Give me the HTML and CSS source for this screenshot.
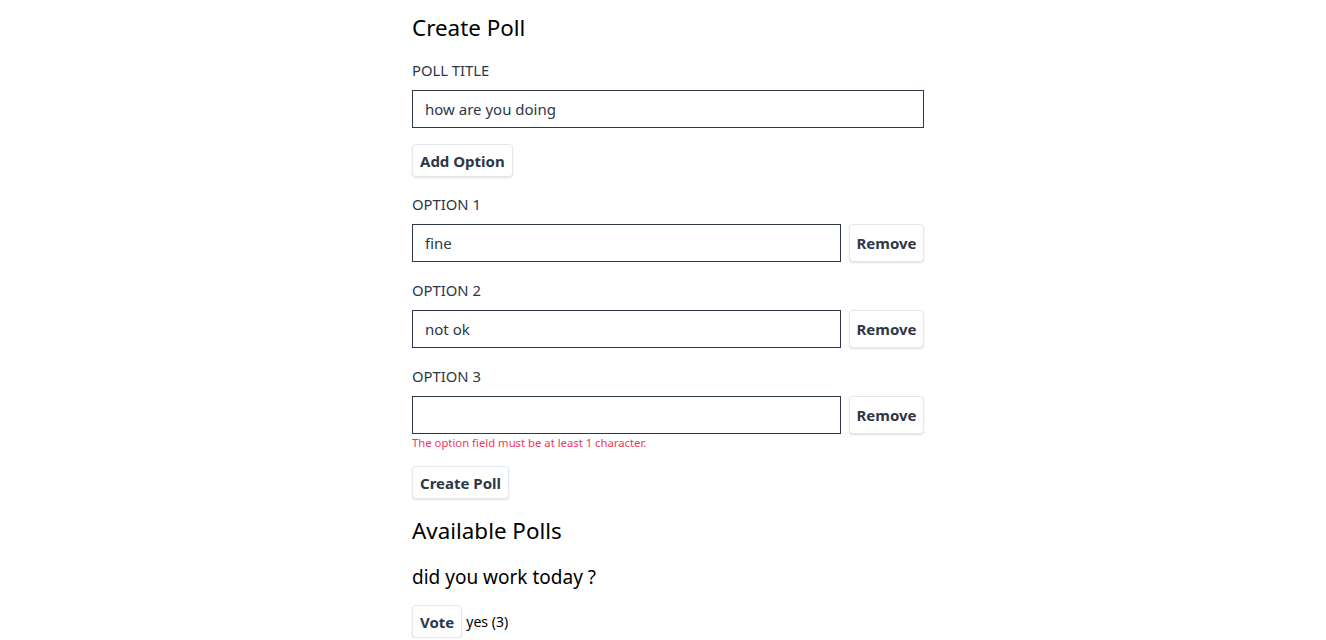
FILE: index.html
```html
<!DOCTYPE html>
<html>
<head>
<meta charset="utf-8">
<link rel="stylesheet" href="styles.css">
</head>
<body>
<div class="page">
  <h2 class="heading">Create Poll</h2>
  <form class="form">
    <div class="field">
      <label class="label">POLL TITLE</label>
      <input class="input" type="text" value="how are you doing">
    </div>
    <div class="actions"><button type="button" class="btn">Add Option</button></div>
    <div class="field">
      <label class="label">OPTION 1</label>
      <div class="row"><input class="input" type="text" value="fine"><button type="button" class="btn btn-row">Remove</button></div>
    </div>
    <div class="field">
      <label class="label">OPTION 2</label>
      <div class="row"><input class="input" type="text" value="not ok"><button type="button" class="btn btn-row">Remove</button></div>
    </div>
    <div class="field">
      <label class="label">OPTION 3</label>
      <div class="row"><input class="input" type="text" value=""><button type="button" class="btn btn-row">Remove</button></div>
      <p class="error">The option field must be at least 1 character.</p>
    </div>
    <div class="actions actions-last"><button type="button" class="btn">Create Poll</button></div>
  </form>
  <h2 class="heading heading-polls">Available Polls</h2>
  <h3 class="poll-title">did you work today ?</h3>
  <div class="vote-row"><button type="button" class="btn">Vote</button><span class="option-text">yes (3)</span></div>
</div>
</body>
</html>
```
FILE: styles.css
```css
html, body { margin: 0; padding: 0; background: #fff; }
body { font-family: "Noto Sans", "Open Sans", sans-serif; color: #000; padding-left: 10px; }
.page { width: 512px; margin: 0 auto; padding-top: 12px; }
.heading { font-size: 22.4px; font-weight: 400; margin: 0; line-height: 32px; }
.form { margin-top: 17px; }
.field { display: flex; flex-direction: column; }
.label { font-size: 14.8px; color: #2d3748; line-height: 18px; margin-bottom: 11px; }
.input { box-sizing: border-box; height: 38px; border: 1px solid #2d3748; border-radius: 0; padding: 0 12px; font: inherit; font-size: 15px; color: #2d3748; width: 100%; outline: none; }
.row { display: flex; gap: 8px; }
.row .input { flex: 1; }
.actions { margin: 16px 0 18px; }
.actions-last { margin-bottom: 0; }
.btn { font-family: inherit; font-size: 15px; font-weight: 700; color: #2d3748; background: #fff; border: 1px solid #e2e8f0; border-radius: 4px; box-shadow: 0 1px 2px rgba(0,0,0,0.12); padding: 0 7px; height: 33px; cursor: pointer; }
.btn-row { height: 38px; padding: 0 6.5px; }
.field + .field { margin-top: 19px; }
.error { margin: 2px 0 0; font-size: 11.3px; color: #f5365c; line-height: 14px; }
.heading-polls { margin-top: 16px; }
.poll-title { font-size: 19px; font-weight: 400; margin: 17px 0 0; line-height: 26px; }
.vote-row { margin-top: 15px; display: flex; align-items: center; gap: 4px; }
.option-text { font-size: 14px; }
```
